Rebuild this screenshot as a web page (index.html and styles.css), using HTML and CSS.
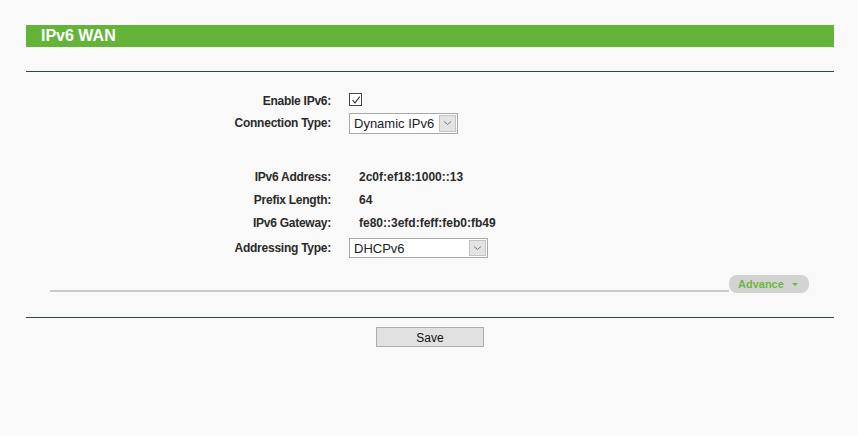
FILE: index.html
```html
<!DOCTYPE html>
<html>
<head>
<meta charset="utf-8">
<link rel="stylesheet" href="styles.css">
</head>
<body>
<div class="page">
  <div class="title-bar">IPv6 WAN</div>
  <div class="rule"></div>
  <div class="form">
    <div class="label r1">Enable IPv6:</div>
    <div class="value r1">
      <span class="checkbox"><svg width="10" height="10" viewBox="0 0 10 10"><path d="M1.5 5.2 L4 7.8 L8.8 1.6" fill="none" stroke="#333" stroke-width="1.1"/></svg></span>
    </div>
    <div class="label r1">Connection Type:</div>
    <div class="value r1">
      <div class="select sel-conn"><span class="sel-text">Dynamic IPv6</span><span class="sel-arrow"><svg width="9" height="6" viewBox="0 0 9 6"><path d="M1 1.5 L4.5 4.5 L8 1.5" fill="none" stroke="#777" stroke-width="1"/></svg></span></div>
    </div>
    <div class="spacer"></div>
    <div class="label r2">IPv6 Address:</div>
    <div class="value r2 text">2c0f:ef18:1000::13</div>
    <div class="label r2">Prefix Length:</div>
    <div class="value r2 text">64</div>
    <div class="label r2">IPv6 Gateway:</div>
    <div class="value r2 text">fe80::3efd:feff:feb0:fb49</div>
    <div class="label r3">Addressing Type:</div>
    <div class="value r3">
      <div class="select sel-addr"><span class="sel-text">DHCPv6</span><span class="sel-arrow"><svg width="9" height="6" viewBox="0 0 9 6"><path d="M1 1.5 L4.5 4.5 L8 1.5" fill="none" stroke="#777" stroke-width="1"/></svg></span></div>
    </div>
  </div>
  <div class="advance-row">
    <div class="advance-line"></div>
    <div class="advance-btn">Advance <span class="tri"></span></div>
  </div>
  <div class="rule rule2"></div>
  <div class="actions">
    <button class="save">Save</button>
  </div>
</div>
</body>
</html>
```
FILE: styles.css
```css
html, body {
  margin: 0;
  padding: 0;
  background: #f9f9f9;
}
body {
  font-family: "Liberation Sans", Arial, sans-serif;
  color: #2a2a2a;
}
.page {
  width: 808px;
  margin-left: 26px;
  padding-top: 25px;
}
.title-bar {
  height: 22px;
  background: #64b43a;
  color: #fff;
  font-weight: bold;
  font-size: 16px;
  line-height: 22px;
  padding-left: 15px;
}
.rule {
  height: 1px;
  background: #2f4a3b;
  margin-top: 24px;
}
.form {
  display: grid;
  grid-template-columns: 305px 1fr;
  column-gap: 18px;
  margin-top: 18px;
  font-size: 12px;
  font-weight: bold;
}
.label {
  text-align: right;
  display: flex;
  align-items: center;
  justify-content: flex-end;
  letter-spacing: -0.25px;
}
.value {
  display: flex;
  align-items: center;
}
.r1 { height: 22px; }
.r2 { height: 23px; }
.r3 { height: 28px; }
.spacer {
  grid-column: 1 / span 2;
  height: 31px;
}
.text {
  padding-left: 10px;
}
.checkbox {
  width: 11px;
  height: 11px;
  border: 1px solid #444;
  background: #fff;
  display: flex;
  align-items: center;
  justify-content: center;
  margin-top: -3px;
}
.select {
  display: flex;
  align-items: stretch;
  background: #fff;
  border: 1px solid #a9a9a9;
  font-weight: normal;
  font-size: 13px;
  color: #222;
  box-sizing: border-box;
}
.sel-conn {
  width: 109px;
  height: 21px;
}
.sel-addr {
  width: 139px;
  height: 20px;
}
.sel-text {
  flex: 1;
  padding-left: 4px;
  display: flex;
  align-items: center;
}
.sel-arrow {
  width: 15px;
  margin: 1px;
  background: #e3e3e3;
  border: 1px solid #c4c4c4;
  display: flex;
  align-items: center;
  justify-content: center;
}
.advance-row {
  display: flex;
  align-items: flex-end;
  margin: 13px 25px 0 24px;
}
.advance-line {
  flex: 1;
  height: 2px;
  background: #cacaca;
  margin-bottom: 1px;
}
.advance-btn {
  width: 80px;
  height: 18px;
  box-sizing: border-box;
  background: #d3d3d3;
  border-radius: 8px;
  color: #6cb83e;
  font-weight: bold;
  font-size: 11px;
  display: flex;
  align-items: center;
  padding-left: 9px;
}
.tri {
  width: 0;
  height: 0;
  border-left: 3px solid transparent;
  border-right: 3px solid transparent;
  border-top: 3px solid #6cb83e;
  margin-left: 8px;
  margin-top: 1px;
}
.rule2 {
  margin-top: 24px;
}
.actions {
  display: flex;
  justify-content: center;
  margin-top: 9px;
}
.save {
  width: 108px;
  height: 20px;
  background: #e1e1e1;
  border: 1px solid #adadad;
  font-family: "Liberation Sans", Arial, sans-serif;
  font-size: 12px;
  color: #111;
  padding: 1px 0 0 0;
}
```
